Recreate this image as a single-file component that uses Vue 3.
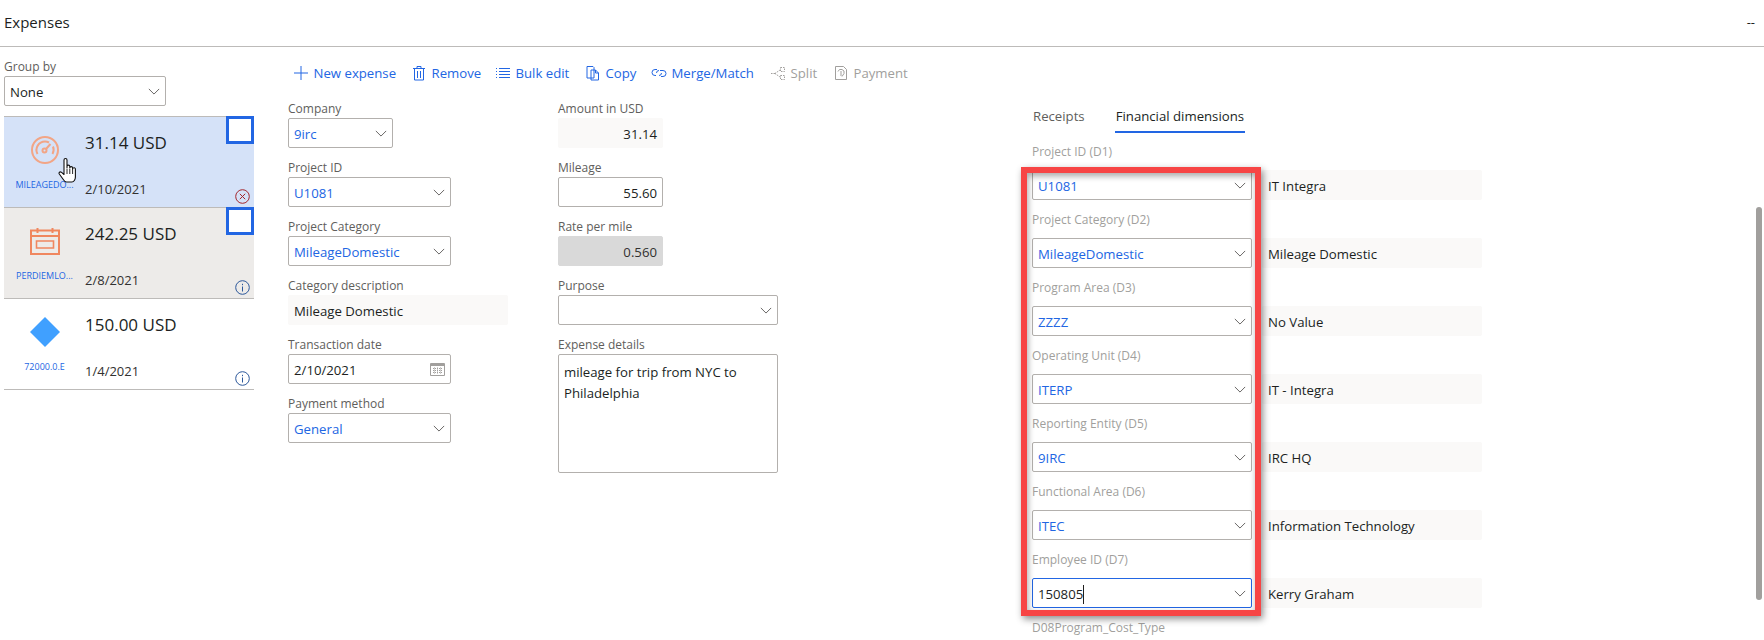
<template>
  <div class="page">
    <header class="top">
      <span class="title">Expenses</span>
      <span class="dashes">--</span>
    </header>

    <div class="content">
      <aside class="left">
        <div class="lbl">Group by</div>
        <div class="ctl group-select">
          <span>None</span>
          <svg class="chev" width="14" height="8" viewBox="0 0 14 8"><path d="M1 1l6 6 6-6" /></svg>
        </div>

        <div class="cards">
          <div v-for="c in cards" :key="c.code" class="card" :class="c.cls">
            <div class="card-side">
              <div class="card-icon">
                <svg v-if="c.icon === 'gauge'" width="30" height="30" viewBox="0 0 30 30" fill="none" stroke="#f2a586" stroke-width="2">
                  <circle cx="15" cy="15" r="13" />
                  <path d="M7.500 19A8.500 8.500 0 0 1 15 6.500a8.500 8.500 0 0 1 4 1" />
                  <path d="M23 11.500a8.500 8.500 0 0 1-.5 7.500" />
                  <circle cx="14.500" cy="15.500" r="2" />
                  <path d="M16 14l4.500-5" />
                </svg>
                <svg v-else-if="c.icon === 'calendar'" width="30" height="28" viewBox="0 0 30 28" fill="none" stroke="#f0875f" stroke-width="2">
                  <path d="M1 3.500h28v23.500H1zM1 9h28M7.500 1v5M22.500 1v5" />
                  <path d="M6.500 14h17v7h-17z" stroke-width="1.600" />
                </svg>
                <svg v-else width="30" height="30" viewBox="0 0 30 30"><path d="M15 0l15 15-15 15L0 15z" fill="#40a0ff" /></svg>
              </div>
              <div class="card-code">{{ c.code }}</div>
            </div>
            <div class="card-main">
              <div class="amount">{{ c.amount }}</div>
              <div class="date">{{ c.date }}</div>
            </div>
            <div v-if="c.check" class="check"></div>
            <svg v-if="c.status === 'error'" class="status" width="15" height="15" viewBox="0 0 15 15" fill="none" stroke="#a4262c">
              <circle cx="7.500" cy="7.500" r="6.800" />
              <path d="M4.800 4.800l5.400 5.400M10.200 4.800l-5.400 5.400" />
            </svg>
            <svg v-else class="status" width="15" height="15" viewBox="0 0 15 15" fill="none" stroke="#2b579a">
              <circle cx="7.500" cy="7.500" r="6.800" />
              <path d="M7.500 6.500v5M7.500 3.800v1.400" />
            </svg>
          </div>
        </div>
      </aside>

      <main class="middle">
        <nav class="toolbar">
          <span v-for="t in tools" :key="t.text" class="tool" :class="{ off: t.off }" :style="{ width: t.w + 'px' }">
            <svg class="tool-icon" width="16" height="16" viewBox="0 0 16 16" fill="none" stroke="currentColor" v-html="t.icon"></svg>
            <span>{{ t.text }}</span>
          </span>
        </nav>

        <div class="form">
          <div class="col col-a">
            <div class="field">
              <div class="lbl">Company</div>
              <div class="ctl w-s link"><span>9irc</span><svg class="chev" width="14" height="8" viewBox="0 0 14 8"><path d="M1 1l6 6 6-6" /></svg></div>
            </div>
            <div class="field">
              <div class="lbl">Project ID</div>
              <div class="ctl w-m link"><span>U1081</span><svg class="chev" width="14" height="8" viewBox="0 0 14 8"><path d="M1 1l6 6 6-6" /></svg></div>
            </div>
            <div class="field">
              <div class="lbl">Project Category</div>
              <div class="ctl w-m link"><span>MileageDomestic</span><svg class="chev" width="14" height="8" viewBox="0 0 14 8"><path d="M1 1l6 6 6-6" /></svg></div>
            </div>
            <div class="field">
              <div class="lbl">Category description</div>
              <div class="ctl w-l readonly"><span>Mileage Domestic</span></div>
            </div>
            <div class="field">
              <div class="lbl">Transaction date</div>
              <div class="ctl w-m">
                <span>2/10/2021</span>
                <svg class="cal" width="15" height="14" viewBox="0 0 15 14" fill="none" stroke="#a19f9d">
                  <path d="M.5 1.500h14v12H.5z" />
                  <path d="M.5 2.500h14M.5 3.500h14" />
                  <path d="M3 6.500h9M3 8.500h9M3 10.500h9M4.500 5.500v6.500M7.500 5.500v6.500M10.500 5.500v6.500" stroke-dasharray="1 1" />
                </svg>
              </div>
            </div>
            <div class="field">
              <div class="lbl">Payment method</div>
              <div class="ctl w-m link"><span>General</span><svg class="chev" width="14" height="8" viewBox="0 0 14 8"><path d="M1 1l6 6 6-6" /></svg></div>
            </div>
          </div>

          <div class="col col-b">
            <div class="field">
              <div class="lbl">Amount in USD</div>
              <div class="ctl w-s readonly num"><span>31.14</span></div>
            </div>
            <div class="field">
              <div class="lbl">Mileage</div>
              <div class="ctl w-s num"><span>55.60</span></div>
            </div>
            <div class="field">
              <div class="lbl">Rate per mile</div>
              <div class="ctl w-s locked num"><span>0.560</span></div>
            </div>
            <div class="field">
              <div class="lbl">Purpose</div>
              <div class="ctl w-l"><span></span><svg class="chev" width="14" height="8" viewBox="0 0 14 8"><path d="M1 1l6 6 6-6" /></svg></div>
            </div>
            <div class="field">
              <div class="lbl">Expense details</div>
              <div class="details">mileage for trip from NYC to Philadelphia</div>
            </div>
          </div>
        </div>
      </main>

      <section class="right">
        <div class="tabs">
          <span class="tab">Receipts</span>
          <span class="tab active">Financial dimensions</span>
        </div>
        <div v-for="d in dims" :key="d.label" class="dim">
          <div class="dim-lbl">{{ d.label }}</div>
          <div class="dim-row">
            <div class="ctl w-l" :class="d.editing ? 'focused' : 'link'">
              <span class="dim-val">{{ d.value }}<i v-if="d.editing" class="caret"></i></span>
              <svg class="chev" width="14" height="8" viewBox="0 0 14 8"><path d="M1 1l6 6 6-6" /></svg>
            </div>
            <div class="ctl w-l readonly"><span>{{ d.desc }}</span></div>
          </div>
        </div>
        <div class="dim-lbl">D08Program_Cost_Type</div>
      </section>
    </div>

    <div class="callout"></div>
    <div class="scrollbar"></div>
    <svg class="hand" width="20" height="26" viewBox="0 0 20 26">
      <path d="M6 14V3a1.500 1.500 0 0 1 3 0v8V9.500a1.400 1.400 0 0 1 2.800 0V11a1.400 1.400 0 0 1 2.800 0v1a1.400 1.400 0 0 1 2.800.3V20c0 2.500-1.600 5-3.500 5H8.500c-1.500 0-2.300-1-3.200-2.500L1.300 17c-.8-1.300.6-2.800 2-1.800L6 17.500z" fill="#fff" stroke="#111" stroke-width="1.100" stroke-linejoin="round" />
      <path d="M9 12v5M11.800 12v5M14.600 12v5" stroke="#111" stroke-width=".9" fill="none" />
    </svg>
  </div>
</template>

<script setup>
const cards = [
  { code: 'MILEAGEDO...', amount: '31.14 USD', date: '2/10/2021', cls: 'selected', icon: 'gauge', check: true, status: 'error' },
  { code: 'PERDIEMLO...', amount: '242.25 USD', date: '2/8/2021', cls: 'hovered', icon: 'calendar', check: true, status: 'info' },
  { code: '72000.0.E', amount: '150.00 USD', date: '1/4/2021', cls: '', icon: 'diamond', check: false, status: 'info' },
]

const tools = [
  { text: 'New expense', w: 118, icon: '<path d="M8 1v14M1 8h14"/>' },
  { text: 'Remove', w: 84, icon: '<path d="M3.500 4v11h9V4M2 3.500h12M6 3.500V1.500h4v2M6.500 6v7M9.500 6v7"/>' },
  { text: 'Bulk edit', w: 90, icon: '<path d="M1 3.500h1M4 3.500h11M1 6.500h1M4 6.500h11M1 9.500h1M4 9.500h11M1 12.500h1M4 12.500h11"/>' },
  { text: 'Copy', w: 66, icon: '<path d="M2 1.500h6l1 1v10.500H2zM6 5h4.500l3 3v7H6zM10.500 5v3h3"/>' },
  { text: 'Merge/Match', w: 119, icon: '<path d="M6 4.500H4a3 3 0 0 0 0 6h1M9 5.500h3a3 3 0 0 1 0 6h-2M5.500 8a2.500 2.500 0 0 1 2.500-2.500M10.500 8a2.500 2.500 0 0 1-2.500 2.500"/>' },
  { text: 'Split', w: 63, off: true, icon: '<path d="M10.500 2.500h4v4h-4zM10.500 10.500h4v4h-4zM1 8.500h4M5 8.500l5-3.500M5 8.500l5 3.500" stroke-dasharray="1.500 1"/>' },
  { text: 'Payment', w: 80, off: true, icon: '<path d="M2.500 1.500h8l3 3v10h-11zM5 6.500a3 3 0 0 1 6 2l-2 3M8 6v5"/>' },
]

const dims = [
  { label: 'Project ID (D1)', value: 'U1081', desc: 'IT Integra' },
  { label: 'Project Category (D2)', value: 'MileageDomestic', desc: 'Mileage Domestic' },
  { label: 'Program Area (D3)', value: 'ZZZZ', desc: 'No Value' },
  { label: 'Operating Unit (D4)', value: 'ITERP', desc: 'IT - Integra' },
  { label: 'Reporting Entity (D5)', value: '9IRC', desc: 'IRC HQ' },
  { label: 'Functional Area (D6)', value: 'ITEC', desc: 'Information Technology' },
  { label: 'Employee ID (D7)', value: '150805', desc: 'Kerry Graham', editing: true },
]
</script>

<style>
html, body {
  margin: 0;
  background: #fff;
}
</style>

<style scoped>
.page {
  position: relative;
  width: 1764px;
  height: 640px;
  overflow: hidden;
  background: #fff;
  color: #201f1e;
  font-family: "Open Sans", "Noto Sans", sans-serif;
  font-size: 13.200px;
}

.top {
  height: 47px;
  box-sizing: border-box;
  border-bottom: 1px solid #bdbbb9;
  display: flex;
  justify-content: space-between;
  align-items: center;
  padding: 0 9px 3px 4px;
}

.title {
  font-size: 15px;
  font-weight: 500;
}

.dashes {
  font-size: 13px;
}

.content {
  display: flex;
}

.left {
  width: 250px;
  margin-left: 4px;
  padding-top: 11px;
}

.lbl {
  height: 18px;
  line-height: 18px;
  font-size: 12px;
  color: #605e5c;
}

.ctl {
  box-sizing: border-box;
  height: 30px;
  border: 1px solid #b3b0ad;
  border-radius: 2px;
  display: flex;
  align-items: center;
  justify-content: space-between;
  padding: 0 5px;
  white-space: nowrap;
}

.ctl > span {
  padding-top: 2px;
}

.chev {
  fill: none;
  stroke: #605e5c;
  stroke-width: 1.100;
  flex: none;
  width: 12px;
  height: 7px;
}

.group-select {
  width: 162px;
}

.cards {
  margin-top: 10px;
  border-top: 1px solid #bdbbb9;
}

.card {
  position: relative;
  box-sizing: border-box;
  height: 91px;
  border-bottom: 1px solid #bdbbb9;
  display: flex;
}

.card.selected {
  background: #d5e2f8;
}

.card.hovered {
  background: #edebe9;
}

.card-side {
  width: 81px;
  display: flex;
  flex-direction: column;
  align-items: center;
}

.card-icon {
  height: 30px;
  margin-top: 18px;
  display: flex;
  align-items: center;
}

.card-code {
  margin-top: 13px;
  font-size: 9px;
  color: #2266e3;
  white-space: nowrap;
}

.amount {
  margin-top: 14px;
  font-size: 17px;
  line-height: 24px;
  font-weight: 500;
}

.date {
  margin-top: 25px;
  font-size: 13px;
  line-height: 18px;
  color: #323130;
}

.check {
  position: absolute;
  top: -1px;
  right: 0;
  box-sizing: border-box;
  width: 28px;
  height: 28px;
  border: 3px solid #2266e3;
  background: #fff;
}

.status {
  position: absolute;
  right: 4px;
  bottom: 3px;
}

.middle {
  width: 744px;
  margin-left: 34px;
}

.toolbar {
  display: flex;
  align-items: center;
  height: 24px;
  margin-top: 14px;
  padding-left: 5px;
  color: #2266e3;
}

.tool {
  display: flex;
  align-items: center;
  gap: 4.500px;
  white-space: nowrap;
  flex: none;
}

.tool.off {
  color: #a19f9d;
}

.form {
  display: flex;
  margin-top: 15px;
}

.col {
  display: flex;
  flex-direction: column;
}

.col-a {
  width: 270px;
}

.field {
  height: 59px;
}

.w-s {
  width: 105px;
}

.w-m {
  width: 163px;
}

.w-l {
  width: 220px;
}

.link {
  color: #2266e3;
}

.readonly {
  background: #faf9f8;
  border-color: #faf9f8;
}

.num {
  justify-content: flex-end;
}

.locked {
  background: #d9d9d9;
  border-color: #d9d9d9;
  color: #323130;
}

.details {
  box-sizing: border-box;
  width: 220px;
  height: 119px;
  border: 1px solid #b3b0ad;
  border-radius: 2px;
  padding: 7px 5px;
  line-height: 21px;
}

.tabs {
  display: flex;
  height: 38px;
  margin-top: 57px;
}

.tab {
  margin-right: 29px;
  padding: 0 1px;
  line-height: 24px;
  color: #605e5c;
  height: 27px;
}

.tab.active {
  color: #201f1e;
  border-bottom: 2px solid #2266e3;
}

.dim {
  height: 68px;
}

.dim-lbl {
  height: 19px;
  line-height: 19px;
  font-size: 12px;
  color: #a19f9d;
}

.dim-row {
  display: flex;
  gap: 10px;
  margin-top: 9px;
}

.dim-val {
  display: inline-flex;
  align-items: center;
}

.focused {
  border-color: #2266e3;
  color: #201f1e;
}

.caret {
  display: block;
  width: 1px;
  height: 19px;
  background: #201f1e;
}

.callout {
  position: absolute;
  left: 1021px;
  top: 167px;
  box-sizing: border-box;
  width: 240px;
  height: 449px;
  border: 6px solid #f74545;
  box-shadow: 2px 3px 7px rgba(0, 0, 0, 0.45), inset 1px 3px 6px rgba(0, 0, 0, 0.35);
  pointer-events: none;
}

.scrollbar {
  position: absolute;
  left: 1756px;
  top: 207px;
  width: 6px;
  height: 393px;
  border-radius: 3px;
  background: #a19f9d;
}

.hand {
  position: absolute;
  left: 58px;
  top: 157px;
}
</style>
